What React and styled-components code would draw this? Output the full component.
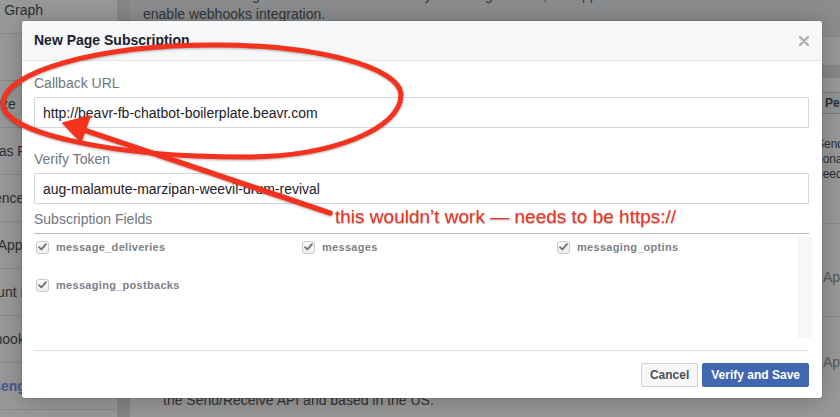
import React from "react";
import styled, { createGlobalStyle } from "styled-components";

const Global = createGlobalStyle`
  html, body { margin: 0; padding: 0; width: 840px; height: 417px; overflow: hidden; }
  body { font-family: "Liberation Sans", Helvetica, Arial, sans-serif; background: #e9ebee; }
  * { box-sizing: border-box; }
`;

const Page = styled.div`
  position: relative;
  width: 840px;
  height: 417px;
  overflow: hidden;
  display: flex;
  background: #e9ebee;
`;

const Sidebar = styled.nav`
  flex: none;
  width: 157px;
  margin-left: -40px;
  margin-top: -13px;
  background: #fff;
  display: flex;
  flex-direction: column;
`;

const SideItem = styled.div`
  flex: none;
  height: 47px;
  border-bottom: 1px solid #e5e5e5;
  display: flex;
  align-items: center;
  padding-left: 6px;
  font-size: 14px;
  white-space: nowrap;
  color: ${(p) => (p.$active ? "#7495ec" : "#4b4f56")};
  font-weight: ${(p) => (p.$active ? "bold" : "normal")};
`;

const Gutter = styled.div`
  flex: none;
  width: 13px;
  background: #dfe1e4;
`;

const Content = styled.main`
  flex: 1;
  min-width: 0;
  display: flex;
  flex-direction: column;
`;

const Intro = styled.p`
  margin: -14px 0 0;
  padding: 0 13px;
  font-size: 14px;
  line-height: 19px;
  color: #55595f;
  white-space: nowrap;
`;

const Card = styled.section`
  flex: 1;
  margin-top: 12px;
  background: #fff;
  border-top: 1px solid #dddfe2;
`;

const CardSpacer = styled.div`
  height: 28px;
`;

const HeadBand = styled.div`
  height: 13px;
  background: #e3e5e8;
`;

const Row = styled.div`
  display: grid;
  grid-template-columns: 686px 1fr;
  height: ${(p) => p.$h || "auto"};
  border-bottom: ${(p) => (p.$last ? "none" : "1px solid #e5e5e5")};
`;

const Desc = styled.div`
  padding: ${(p) => p.$top || "36px"} 0 0 33px;
  font-size: 14px;
  line-height: 19px;
  color: #55595f;
  white-space: nowrap;
  overflow: hidden;
`;

const StatusCell = styled.div`
  padding-top: ${(p) => p.$top || "0px"};
  padding-left: 7px;
  font-size: 14px;
  line-height: 18px;
  color: #90949c;
  white-space: nowrap;
`;

const ActionCell = styled.div`
  display: flex;
  flex-direction: column;
  align-items: flex-start;
  white-space: nowrap;
`;

const SmallButton = styled.span`
  margin-top: 14px;
  height: 22px;
  display: inline-flex;
  align-items: center;
  padding: 0 8px;
  border: 1px solid #ced0d4;
  background: #f6f7f9;
  border-radius: 2px;
  font-size: 12px;
  font-weight: bold;
  color: #4b4f56;
`;

const SmallText = styled.div`
  margin-top: 23px;
  font-size: 12px;
  line-height: 15px;
  color: #4b4f56;
`;

const Overlay = styled.div`
  position: absolute;
  inset: 0;
  background: rgba(0, 0, 0, 0.4);
  padding: 21px 0 0 22px;
`;

const Modal = styled.div`
  width: 800px;
  height: 377px;
  background: #fff;
  border-radius: 3px;
  box-shadow: 0 2px 26px rgba(0, 0, 0, 0.25), 0 0 0 1px rgba(0, 0, 0, 0.06);
  display: flex;
  flex-direction: column;
  overflow: hidden;
`;

const Header = styled.header`
  flex: none;
  height: 40px;
  display: flex;
  align-items: center;
  justify-content: space-between;
  padding: 0 13px 0 12px;
  background: #f6f7f9;
  border-bottom: 1px solid #e5e5e5;
`;

const Title = styled.h2`
  margin: 0;
  font-size: 14px;
  line-height: 19px;
  font-weight: bold;
  color: #1d2129;
`;

const CloseButton = styled.span`
  display: flex;
  width: 10px;
  height: 10px;
`;

const Body = styled.div`
  flex: 1;
  display: flex;
  flex-direction: column;
  padding: 13px 13px 0 12px;
`;

const Label = styled.div`
  margin-top: ${(p) => p.$mt || "0px"};
  font-size: 14px;
  line-height: 18px;
  color: #717680;
  padding-bottom: ${(p) => (p.$ruled ? "5px" : "0")};
  border-bottom: ${(p) => (p.$ruled ? "1px solid #b8bbc0" : "none")};
`;

const TextInput = styled.div`
  margin-top: 5px;
  height: 31px;
  display: flex;
  align-items: center;
  padding: 0 8px;
  border: 1px solid #d3d6db;
  border-radius: 1px;
  font-size: 14px;
  color: #1d2129;
  white-space: nowrap;
`;

const FieldList = styled.div`
  display: flex;
  height: 104px;
  margin-right: -3px;
`;

const FieldGrid = styled.div`
  flex: 1;
  display: grid;
  grid-template-columns: 266px 255px 1fr;
  grid-auto-rows: 20px;
  row-gap: 18px;
  align-content: start;
  padding: 3px 0 0 2px;
`;

const Track = styled.div`
  flex: none;
  width: 14px;
  margin-top: 3px;
  background: #f8f8f8;
  border-left: 1px solid #ececec;
`;

const Field = styled.label`
  display: flex;
  align-items: center;
`;

const Check = styled.span`
  flex: none;
  width: 13px;
  height: 13px;
  display: flex;
  align-items: center;
  justify-content: center;
  border: 1px solid #c9cace;
  border-radius: 3px;
  background: linear-gradient(#fbfbfb, #eeeeee);
`;

const FieldName = styled.span`
  margin-left: 7px;
  font-size: 11px;
  font-weight: bold;
  letter-spacing: 0.3px;
  color: #7e8187;
`;

const Footer = styled.footer`
  margin-top: auto;
  display: flex;
  justify-content: flex-end;
  gap: 4px;
  border-top: 1px solid #dddfe2;
  padding: 12px 0 11px;
`;

const Button = styled.button`
  height: 24px;
  padding: 0 8px;
  border-radius: 2px;
  font-family: inherit;
  font-size: 12px;
  font-weight: bold;
  line-height: 22px;
  border: 1px solid ${(p) => (p.$primary ? "#4267b2" : "#ced0d4")};
  background: ${(p) => (p.$primary ? "#4267b2" : "#f6f7f9")};
  color: ${(p) => (p.$primary ? "#fff" : "#4b4f56")};
`;

const AnnotationLayer = styled.div`
  position: absolute;
  inset: 0;
  pointer-events: none;
`;

const Drawing = styled.svg`
  position: absolute;
  left: 0;
  top: 0;
  filter: drop-shadow(0 1px 1px rgba(0, 0, 0, 0.3));
`;

const Note = styled.div`
  position: absolute;
  left: 335px;
  top: 206px;
  font-size: 19px;
  line-height: 22px;
  color: #f4321e;
  white-space: nowrap;
  text-shadow: 0 1px 1px rgba(0, 0, 0, 0.3), 0 0 1px rgba(255, 255, 255, 0.6);
`;

const sideItems = [
  "Open Graph",
  "Tools",
  "Analyze",
  "Canvas Feed",
  "Audience Network",
  "Web Apps",
  "Account Kit",
  "Webhooks",
  "Messenger",
  "Settings",
];

const fields = [
  "message_deliveries",
  "messages",
  "messaging_optins",
  "messaging_postbacks",
];

function Tick() {
  return (
    <svg width="9" height="8" viewBox="0 0 9 8">
      <path d="M1 4.2 L3.4 6.4 L8 1.2" fill="none" stroke="#6b6e74" strokeWidth="1.8" strokeLinecap="round" strokeLinejoin="round" />
    </svg>
  );
}

export default function App() {
  return (
    <>
      <Global />
      <Page>
        <Sidebar>
          {sideItems.map((s) => (
            <SideItem key={s} $active={s === "Messenger"}>
              {s}
            </SideItem>
          ))}
        </Sidebar>
        <Gutter />
        <Content>
          <Intro>
            To receive messages and other events sent by Messenger users, the app should
            <br />
            enable webhooks integration.
          </Intro>
          <Card>
            <CardSpacer />
            <HeadBand />
            <Row $h="146px">
              <Desc $top="20px">Page messaging permissions for this app.</Desc>
              <ActionCell>
                <SmallButton>Permissions</SmallButton>
                <SmallText>
                  Sends
                  <br />
                  donations
                  <br />
                  needs
                </SmallText>
              </ActionCell>
            </Row>
            <Row $h="93px">
              <Desc $top="44px">Allows the app to receive messages sent to your page.</Desc>
              <StatusCell $top="44px">Approved</StatusCell>
            </Row>
            <Row $last>
              <Desc>
                Allows the app to send messages to people who have messaged your page.
                <br />
                Apps must be reviewed before they can message people who are not admins of
                <br />
                the Send/Receive API and based in the US.
              </Desc>
              <StatusCell $top="36px">Approved</StatusCell>
            </Row>
          </Card>
        </Content>

        <Overlay>
          <Modal>
            <Header>
              <Title>New Page Subscription</Title>
              <CloseButton>
                <svg width="10" height="10" viewBox="0 0 10 10">
                  <path d="M1 1 L9 9 M9 1 L1 9" stroke="#a8aaae" strokeWidth="2.2" strokeLinecap="round" />
                </svg>
              </CloseButton>
            </Header>
            <Body>
              <Label>Callback URL</Label>
              <TextInput>http://beavr-fb-chatbot-boilerplate.beavr.com</TextInput>
              <Label $mt="22px">Verify Token</Label>
              <TextInput>aug-malamute-marzipan-weevil-drum-revival</TextInput>
              <Label $mt="6px" $ruled>
                Subscription Fields
              </Label>
              <FieldList>
                <FieldGrid>
                  {fields.map((f) => (
                    <Field key={f}>
                      <Check>
                        <Tick />
                      </Check>
                      <FieldName>{f}</FieldName>
                    </Field>
                  ))}
                </FieldGrid>
                <Track />
              </FieldList>
              <Footer>
                <Button>Cancel</Button>
                <Button $primary>Verify and Save</Button>
              </Footer>
            </Body>
          </Modal>
        </Overlay>

        <AnnotationLayer>
          <Drawing width="840" height="417" viewBox="0 0 840 417">
            <path
              d="M3 104 C3 71.5 98 45 215 45 C317 45 401 67.5 401 95 C401 129 331 157 245 157 C112 157 3 133 3 104 Z"
              fill="none"
              stroke="#f4321e"
              strokeWidth="5"
            />
            <line x1="330" y1="213" x2="84" y2="130" stroke="#f4321e" strokeWidth="5.5" strokeLinecap="round" />
            <polygon points="63,123 90,116 81,142" fill="#f4321e" stroke="#f4321e" strokeWidth="1.5" strokeLinejoin="round" />
          </Drawing>
          <Note>this wouldn’t work — needs to be https://</Note>
        </AnnotationLayer>
      </Page>
    </>
  );
}
